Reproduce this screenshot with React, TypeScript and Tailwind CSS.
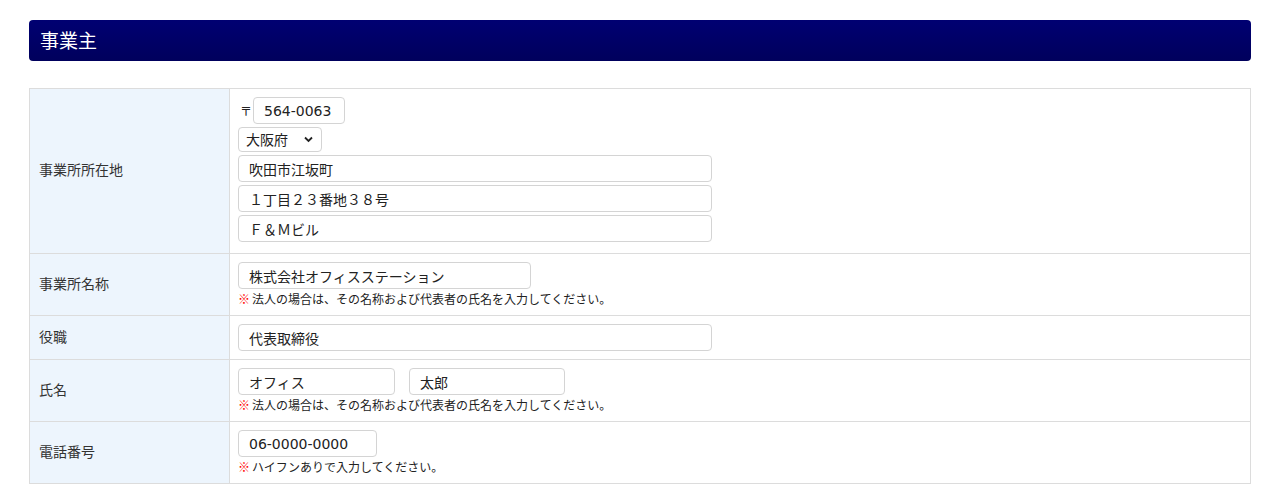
import React from 'react'

const font = { fontFamily: '"Noto Sans CJK JP", "Noto Sans", sans-serif' }
const inputFont = { fontFamily: '"DejaVu Sans", "Noto Sans CJK JP", sans-serif' }

const Field = ({ value, w, className = '' }: { value: string; w: string; className?: string }) => (
  <input
    readOnly
    value={value}
    style={inputFont}
    className={`block h-[27px] ${w} border border-[#d4d4d4] rounded-[4px] bg-white px-[10px] text-[14px] text-[#222] outline-none ${className}`}
  />
)

const Note = ({ children }: { children: React.ReactNode }) => (
  <div className="mt-[2px] flex items-center text-[12px] leading-[16px] text-[#222]">
    <span className="text-[#ff0000] mr-[2px]">※</span>
    {children}
  </div>
)

const Row = ({ label, children }: { label: string; children: React.ReactNode }) => (
  <tr>
    <th className="w-[200px] border border-[#dcdcdc] bg-[#edf5fd] px-[9px] pb-[3px] text-left align-middle text-[14px] font-normal text-[#333]">
      {label}
    </th>
    <td className="border border-[#dcdcdc] bg-white px-[8px] py-[8px] align-top">{children}</td>
  </tr>
)

export default function App() {
  return (
    <div className="min-h-[500px] bg-white px-[29px] pt-[20px]" style={font}>
      <div className="flex h-[41px] items-center rounded-[4px] bg-gradient-to-b from-[#000072] to-[#00005c] px-[11px]">
        <h2 className="text-[19px] text-white">事業主</h2>
      </div>

      <table className="mt-[27px] w-full border-collapse">
        <tbody>
          <Row label="事業所所在地">
            <div className="flex items-center">
              <span className="ml-[2px] mr-[1px] text-[12px] text-[#222]">〒</span>
              <Field value="564-0063" w="w-[92px]" />
            </div>
            <div className="relative mt-[3px] w-[84px]">
              <select
                defaultValue="osaka"
                className="block h-[25px] w-[84px] appearance-none rounded-[4px] border border-[#d4d4d4] bg-white pl-[7px] text-[14px] text-[#222] outline-none"
              >
                <option value="osaka">大阪府</option>
              </select>
              <svg className="pointer-events-none absolute right-[9px] top-[9px]" width="9" height="7" viewBox="0 0 9 7">
                <path d="M1 1.5 L4.5 5 L8 1.5" fill="none" stroke="#222" strokeWidth="1.8" />
              </svg>
            </div>
            <Field value="吹田市江坂町" w="w-[474px]" className="mt-[3px]" />
            <Field value="１丁目２３番地３８号" w="w-[474px]" className="mt-[3px]" />
            <Field value="Ｆ＆Ｍビル" w="w-[474px]" className="mt-[3px] mb-[3px]" />
          </Row>
          <Row label="事業所名称">
            <Field value="株式会社オフィスステーション" w="w-[293px]" />
            <Note>法人の場合は、その名称および代表者の氏名を入力してください。</Note>
          </Row>
          <Row label="役職">
            <Field value="代表取締役" w="w-[474px]" />
          </Row>
          <Row label="氏名">
            <div className="flex gap-[14px]">
              <Field value="オフィス" w="w-[157px]" />
              <Field value="太郎" w="w-[156px]" />
            </div>
            <Note>法人の場合は、その名称および代表者の氏名を入力してください。</Note>
          </Row>
          <Row label="電話番号">
            <Field value="06-0000-0000" w="w-[139px]" />
            <Note>ハイフンありで入力してください。</Note>
          </Row>
        </tbody>
      </table>
    </div>
  )
}
